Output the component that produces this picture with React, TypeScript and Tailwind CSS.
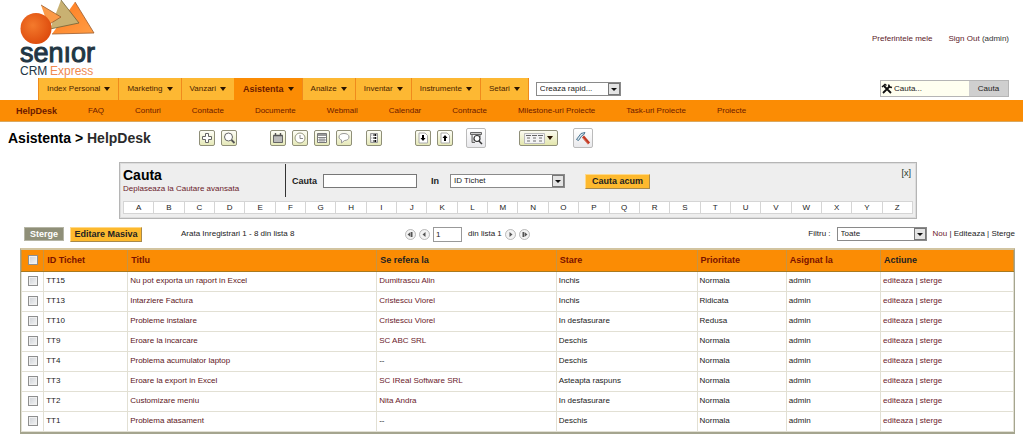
import type { ReactNode } from "react";
import clsx from "clsx";

const tabs = ["Index Personal", "Marketing", "Vanzari", "Asistenta", "Analize", "Inventar", "Instrumente", "Setari"];

const modules = [
  "HelpDesk",
  "FAQ",
  "Conturi",
  "Contacte",
  "Documente",
  "Webmail",
  "Calendar",
  "Contracte",
  "Milestone-uri Proiecte",
  "Task-uri Proiecte",
  "Proiecte",
];

const letters = "ABCDEFGHIJKLMNOPQRSTUVWXYZ".split("");

interface Ticket {
  id: string;
  title: string;
  related?: string;
  status: string;
  priority: string;
}

const tickets: Ticket[] = [
  { id: "TT15", title: "Nu pot exporta un raport in Excel", related: "Dumitrascu Alin", status: "Inchis", priority: "Normala" },
  { id: "TT13", title: "Intarziere Factura", related: "Cristescu Viorel", status: "Inchis", priority: "Ridicata" },
  { id: "TT10", title: "Probleme instalare", related: "Cristescu Viorel", status: "In desfasurare", priority: "Redusa" },
  { id: "TT9", title: "Eroare la incarcare", related: "SC ABC SRL", status: "Deschis", priority: "Normala" },
  { id: "TT4", title: "Problema acumulator laptop", status: "Deschis", priority: "Normala" },
  { id: "TT3", title: "Eroare la export in Excel", related: "SC IReal Software SRL", status: "Asteapta raspuns", priority: "Normala" },
  { id: "TT2", title: "Customizare meniu", related: "Nita Andra", status: "In desfasurare", priority: "Normala" },
  { id: "TT1", title: "Problema atasament", status: "Deschis", priority: "Normala" },
];

const columns = [
  { label: "ID Tichet", sortable: true },
  { label: "Titlu", sortable: true },
  { label: "Se refera la", sortable: false },
  { label: "Stare", sortable: true },
  { label: "Prioritate", sortable: true },
  { label: "Asignat la", sortable: true },
  { label: "Actiune", sortable: false },
];

// Bold labels and buttons
const strong = "text-[9px] font-bold";

function Logo() {
  return (
    <svg width="80" height="78" viewBox="0 0 80 78" aria-label="Senior CRM Express">
      <defs>
        <radialGradient id="ball" cx="0.4" cy="0.4" r="0.65">
          <stop offset="0" stopColor="#f47a2c" />
          <stop offset="1" stopColor="#dd4a0c" />
        </radialGradient>
        <linearGradient id="peak" x1="0" y1="0" x2="1" y2="1">
          <stop offset="0" stopColor="#ff7a1e" />
          <stop offset="1" stopColor="#ff9d45" />
        </linearGradient>
      </defs>
      <path d="M55 2 74 33 32 34Z" fill="url(#peak)" />
      <path d="M55 2 74 33 32 34" fill="none" stroke="#9b5a2c" strokeWidth="0.8" />
      <path d="M41 0 59 23 30 29Z" fill="#c9b172" />
      <path d="M41 0 59 23 30 29" fill="none" stroke="#6f6238" strokeWidth="0.8" />
      <path d="M21 5 41 17 28 25Z" fill="#fb9a48" />
      <path d="M21 5 41 17 28 25" fill="none" stroke="#9a5c2b" strokeWidth="0.8" />
      <circle cx="16" cy="28.500" r="15.500" fill="url(#ball)" />
      <text x="0" y="62" fontSize="27" fill="#223644" stroke="#223644" strokeWidth="1">senıor</text>
      <text x="0" y="75" fontSize="12" fill="#223644">CRM</text>
      <text x="30" y="75" fontSize="12" fill="#f08a50">Express</text>
    </svg>
  );
}

function Caret() {
  return (
    <svg width="6" height="4" viewBox="0 0 6 4" className="shrink-0">
      <path d="M0 0H6L3 4Z" fill="#2a1400" />
    </svg>
  );
}

interface DropdownProps {
  label: string;
  value: string;
  className?: string;
}

function Dropdown({ label, value, className }: DropdownProps) {
  return (
    <div className={clsx("relative h-[14px] shrink-0 border border-[#8a8a8a] bg-white", className)}>
      <select aria-label={label} className="block h-3 w-full appearance-none bg-transparent pl-[3px] text-[8px] leading-3 text-[#222]">
        <option>{value}</option>
      </select>
      <span className="pointer-events-none absolute inset-y-0 right-0 flex w-3 items-center justify-center border border-[#777] bg-[#e4e4e4]">
        <svg width="6" height="3" viewBox="0 0 6 3">
          <path d="M0 0H6L3 3Z" fill="#111" />
        </svg>
      </span>
    </div>
  );
}

interface ToolProps {
  label: string;
  children: ReactNode;
  className?: string;
}

function Tool({ label, children, className }: ToolProps) {
  return (
    <button
      aria-label={label}
      className={clsx(
        "flex h-4 w-4 shrink-0 items-center justify-center rounded-[2px] border border-[#8f8f78] bg-linear-to-b from-[#fdfdf6] to-[#e6e9b8]",
        className
      )}
    >
      <svg width="14" height="14" viewBox="0 0 14 14" fill="none" stroke="#666">
        {children}
      </svg>
    </button>
  );
}

function LargeTool({ label, children }: ToolProps) {
  return (
    <button aria-label={label} className="flex h-5 w-5 shrink-0 items-center justify-center rounded-[2px] border border-[#bbb] bg-linear-to-b from-white to-[#e9e9ec]">
      <svg width="18" height="18" viewBox="0 0 18 18" fill="none">
        {children}
      </svg>
    </button>
  );
}

function PagerButton({ label, children }: ToolProps) {
  return (
    <button aria-label={label} className="h-[11px] w-[11px] shrink-0">
      <svg width="11" height="11" viewBox="0 0 11 11">
        <circle cx="5.500" cy="5.500" r="5" fill="#f3f3f3" stroke="#aaa" strokeWidth="0.8" />
        <g fill="#555">{children}</g>
      </svg>
    </button>
  );
}

function Toolbar() {
  return (
    <div className="flex h-10 items-center pb-2 pl-2">
      <h1 className="w-[191px] shrink-0 text-sm font-bold whitespace-nowrap text-black">
        Asistenta &gt; <a href="#helpdesk" className="text-[#2b2b2b]">HelpDesk</a>
      </h1>
      <div className="flex gap-1.5">
        <Tool label="Adauga">
          <path d="M5.500 2.500h3v3H11.500v3h-3v3h-3v-3h-3v-3h3Z" fill="#fff" />
        </Tool>
        <Tool label="Cauta tichet">
          <circle cx="6.500" cy="6" r="4" fill="#fff" />
          <path d="M9.500 9 12.500 12" stroke="#555" strokeWidth="1.800" />
        </Tool>
      </div>
      <div className="ml-[33px] flex gap-1.5">
        <Tool label="Calendar">
          <path d="M2.500 4.500h9v7h-9Z" fill="#bbb" />
          <path d="M2.500 4.500h9M4.500 2v3M9.500 2v3" stroke="#555" strokeWidth="1.400" />
        </Tool>
        <Tool label="Ceas">
          <circle cx="7" cy="7" r="5" fill="#fff" stroke="#999a80" />
          <path d="M7 4v3.500h3" stroke="#888" />
        </Tool>
        <Tool label="Calculator">
          <path d="M2.500 2.500h9v9h-9Z" fill="#fff" stroke="#777" />
          <path d="M3 4h8" strokeWidth="2" stroke="#999" />
          <path d="M3 6.500h8M3 9h8M5 6v5M7 6v5M9 6v5" strokeWidth="0.7" />
        </Tool>
        <Tool label="Chat">
          <path d="M7 2.500c3 0 5 1.300 5 3.500S10 9.500 7.500 9.500L4.500 12v-3C3 8.500 2 7.500 2 6c0-2.200 2-3.500 5-3.500Z" fill="#fff" stroke="#999" />
        </Tool>
      </div>
      <Tool label="Istoric" className="ml-3.5">
        <path d="M3.500 2.500h7v9h-7Z" fill="#fff" stroke="#999" />
        <path d="M3.500 4h2M3.500 7h2M3.500 10h2" stroke="#aaa" />
        <path d="M6 4h2M6 7h2M6 10h2" stroke="#111" />
        <path d="M8.500 3v8.500" stroke="#111" strokeWidth="1.500" strokeDasharray="2 1" />
      </Tool>
      <div className="ml-[33px] flex gap-1.5">
        <Tool label="Importa">
          <path d="M3 2h6l2.500 2.500V12H3Z" fill="#fff" stroke="#aaa" />
          <path d="M7 4v3" stroke="#000" strokeWidth="2" />
          <path d="M4.500 7h5L7 10Z" fill="#000" stroke="none" />
        </Tool>
        <Tool label="Exporta">
          <path d="M3 2h6l2.500 2.500V12H3Z" fill="#fff" stroke="#aaa" />
          <path d="M7 7v3" stroke="#000" strokeWidth="2" />
          <path d="M4.500 7h5L7 4Z" fill="#000" stroke="none" />
        </Tool>
      </div>
      <div className="ml-[13px] flex">
        <LargeTool label="Gaseste duplicate">
          <path d="M3.500 3.500h11v2h-11ZM5 5.500v8h3M13 5.500V8" fill="#ccc" stroke="#666" />
          <circle cx="10" cy="9.500" r="3" fill="#fff" stroke="#333" strokeWidth="1.200" />
          <path d="m12 12 3 3" stroke="#333" strokeWidth="1.500" />
        </LargeTool>
      </div>
      <button aria-label="Coloane" className="ml-[33px] flex h-4 w-[39px] items-center justify-between rounded-[2px] border border-[#8f8f78] bg-linear-to-b from-[#fbfbf0] to-[#e3e6ac] px-1">
        <svg width="21" height="11" viewBox="0 0 21 11">
          <path d="M0.500 0.500h20v10h-20Z" fill="#f4f4f4" stroke="#bbb" />
          <path d="M2 2.500h5M8 2.500h5M14 2.500h5" stroke="#666" />
          <path d="M3 5h3M9 5h3M15 5h3M3 8h3M9 8h3M15 8h3" stroke="#999" strokeWidth="1.500" />
        </svg>
        <Caret />
      </button>
      <div className="ml-[15px] flex">
        <LargeTool label="Setari modul">
          <path d="M2.500 10.500 7 4.500l4-1-1.500 2.500-1.500.5L4.500 11.500Z" fill="#d9e6f0" stroke="#4a7590" />
          <path d="m9 7.500 6 7" stroke="#c33a24" strokeWidth="2.800" />
          <path d="m8.500 8.500 5.500 6.500" stroke="#e9a090" strokeWidth="0.6" />
        </LargeTool>
      </div>
    </div>
  );
}

function SearchPanel() {
  return (
    <section className="mr-[106px] ml-[119px] border border-[#b5b5b5] bg-[#eee] px-[3px] pb-1 outline-1 -outline-offset-2 outline-[#ddd]">
      <form className="flex h-[38px]" onSubmit={(e) => e.preventDefault()}>
        <div className="mb-1 w-[163px] shrink-0 border-r border-[#333] pt-1">
          <h2 className="text-sm leading-4 font-bold text-black">Cauta</h2>
          <a href="#avansata" className="block leading-3 text-[#6b1a2a]">Deplaseaza la Cautare avansata</a>
        </div>
        <div className="flex h-9 flex-1 items-center pl-1.5">
          <label htmlFor="q" className={clsx(strong, "w-[31px]")}>Cauta</label>
          <input id="q" className="h-[14px] w-[94px] border border-[#777] bg-white px-1" />
          <span className={clsx(strong, "w-[33px] pl-3.5")}>In</span>
          <Dropdown label="In" value="ID Tichet" className="w-[115px]" />
          <button className={clsx(strong, "ml-5 h-[15px] w-[65px] border border-t-[#ffd98a] border-r-[#a8894a] border-b-[#a8894a] border-l-[#ffd98a] bg-[#fdb92e] leading-3")}>
            Cauta acum
          </button>
        </div>
        <button type="button" className="mt-1 h-3 pr-0.5 text-[9px] text-[#23361f]">[x]</button>
      </form>
      <nav className="flex border border-[#d5d5d5] bg-white text-center">
        {letters.map((letter) => (
          <a key={letter} href={`#${letter}`} className="flex-1 border-r border-[#d5d5d5] leading-[11px] last:border-r-0">
            {letter}
          </a>
        ))}
      </nav>
    </section>
  );
}

function ListActions() {
  return (
    <div className="mt-[7px] flex h-4 items-center pr-2 pl-6 whitespace-nowrap">
      <button className={clsx(strong, "h-[14px] w-10 border border-[#b5b5a5] bg-[#8f8f78] leading-3 text-white")}>Sterge</button>
      <button className={clsx(strong, "ml-1.5 h-[15px] w-[72px] border border-t-[#ffd98a] border-r-[#a8894a] border-b-[#a8894a] border-l-[#ffd98a] bg-[#fdb92e] leading-3")}>
        Editare Masiva
      </button>
      <span className="ml-[39px] w-56">Arata Inregistrari 1 - 8 din lista 8</span>
      <div className="flex items-center gap-[3px]">
        <PagerButton label="Prima pagina">
          <path d="M5.500 3v5L2.500 5.500ZM6 3h1.500v5H6Z" />
        </PagerButton>
        <PagerButton label="Pagina anterioara">
          <path d="M6.500 3v5l-3-2.500Z" />
        </PagerButton>
        <input aria-label="Pagina" defaultValue="1" className="h-[15px] w-[29px] border border-[#999] bg-white px-0.5" />
        <span className="pl-[3px]">din lista 1</span>
        <PagerButton label="Pagina urmatoare">
          <path d="M4.500 3v5l3-2.500Z" />
        </PagerButton>
        <PagerButton label="Ultima pagina">
          <path d="M5.500 3v5l3-2.500ZM3.500 3H5v5H3.500Z" />
        </PagerButton>
      </div>
      <span className="mr-1.5 ml-auto">Filtru :</span>
      <Dropdown label="Filtru" value="Toate" className="w-[90px]" />
      <span className="ml-1.5">
        <a href="#nou" className="text-[#6b1a2a]">Nou</a> | <a href="#editeaza">Editeaza</a> | <a href="#sterge">Sterge</a>
      </span>
    </div>
  );
}

function Checkbox({ label }: { label: string }) {
  return (
    <input
      type="checkbox"
      aria-label={label}
      className="mx-auto block h-[10px] w-[10px] appearance-none border border-[#8e8f8f] bg-linear-to-br from-[#ccd0d5] to-[#f6f6f6] shadow-[inset_0_0_0_1px_#f0f0f0]"
    />
  );
}

function TicketTable() {
  return (
    <div className="mt-1.5 mr-2 ml-5 border border-t-2 border-b-2 border-[#a5a58f] border-t-[#d2c4a0]">
      <table className="w-full table-fixed border-collapse text-left">
        <colgroup>
          <col className="w-[22px]" />
          <col className="w-[83px]" />
          <col className="w-[25.1%]" />
          <col className="w-[18.1%]" />
          <col className="w-[14.2%]" />
          <col className="w-[9%]" />
          <col className="w-[9.5%]" />
          <col className="w-[13.4%]" />
        </colgroup>
        <thead>
          <tr className={clsx(strong, "h-[21px] bg-[#fb8c04]")}>
            <th className="border border-t-0 border-[#c99440] border-b-[#a8791f] p-0">
              <Checkbox label="Selecteaza tot" />
            </th>
            {columns.map(({ label, sortable }) => (
              <th key={label} className="border border-t-0 border-[#c99440] border-b-[#a8791f] p-0 pl-[3px]">
                {sortable ? <a href="#sort" className="text-[#7a1200]">{label}</a> : label}
              </th>
            ))}
          </tr>
        </thead>
        <tbody>
          {tickets.map(({ id, title, related, status, priority }) => (
            <tr key={id} className="h-5 [&>td]:border [&>td]:border-[#e2e0d4] [&>td]:whitespace-nowrap [&>td+td]:pl-[2px]">
              <td><Checkbox label={id} /></td>
              <td>{id}</td>
              <td><a href={`#${id}`} className="text-[#5c1622]">{title}</a></td>
              <td>{related ? <a href="#contact" className="text-[#6b1a2a]">{related}</a> : "--"}</td>
              <td>{status}</td>
              <td>{priority}</td>
              <td>admin</td>
              <td>
                <a href="#editeaza" className="text-[#6b1a2a]">editeaza</a> | <a href="#sterge" className="text-[#6b1a2a]">sterge</a>
              </td>
            </tr>
          ))}
        </tbody>
      </table>
    </div>
  );
}

export default function App() {
  return (
    <div className="bg-white font-['Liberation_Sans',Arial,sans-serif] text-[8px] leading-3 text-[#222]">
      <header className="flex h-[78px] justify-between pr-3.5 pl-5">
        <Logo />
        <div className="flex gap-4 pt-[33px] text-[#5c1a2a]">
          <a href="#preferinte">Preferintele mele</a>
          <span><a href="#signout">Sign Out</a> <span className="text-[#333]">(admin)</span></span>
        </div>
      </header>
      <div className="flex h-[22px] pr-3.5 pl-[38px]">
        <nav className="flex whitespace-nowrap">
          {tabs.map((tab) => (
            <a
              key={tab}
              href="#tab"
              className={clsx(
                "flex items-center gap-1 border-l px-2",
                tab === "Asistenta" ? [strong, "border-[#fb8c04] bg-[#fb8c04] text-[#6b1a00]"] : "border-[#f08a1c] bg-[#fdb833] text-[#4a2400]"
              )}
            >
              {tab}
              <Caret />
            </a>
          ))}
        </nav>
        <div className="border-l border-[#f08a1c] pt-1 pl-[7px]">
          <Dropdown label="Creaza rapid" value="Creaza rapid..." className="w-[85px]" />
        </div>
        <form className="mt-0.5 ml-auto flex h-[17px] w-[129px] items-center border border-[#b5b5b5] bg-[#fffff0]" onSubmit={(e) => e.preventDefault()}>
          <svg width="12" height="12" viewBox="0 0 12 12" fill="none" stroke="#111" className="shrink-0">
            <path d="m3 3 7 7M9 3l-7 7" strokeWidth="1.800" />
            <path d="M1 4 4 1.500l1.500 1M7.500 1.500 8.500 4l2.500.5" strokeWidth="1.500" />
          </svg>
          <input aria-label="Cauta global" defaultValue="Cauta..." className="h-3 w-0 flex-1 bg-transparent pl-px" />
          <button className="h-[15px] w-[39px] bg-[#cfcfcf]">Cauta</button>
        </form>
      </div>
      <nav className="flex h-[22px] items-center gap-[31px] border-b border-[#d9a860] bg-[#fb8c04] pl-4 whitespace-nowrap text-[#6b1a00]">
        {modules.map((name) => (
          <a key={name} href="#modul" className={clsx(name === "HelpDesk" && strong)}>
            {name}
          </a>
        ))}
      </nav>
      <Toolbar />
      <SearchPanel />
      <ListActions />
      <TicketTable />
    </div>
  );
}
